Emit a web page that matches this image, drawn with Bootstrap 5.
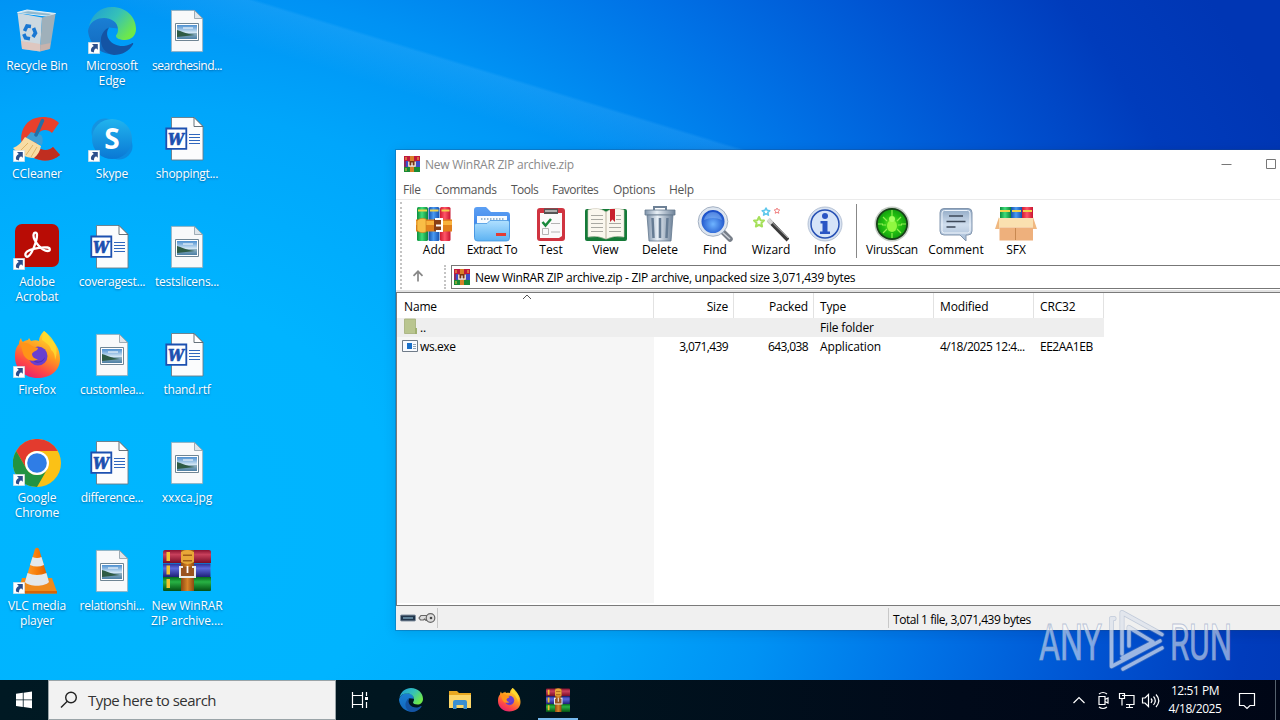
<!DOCTYPE html>
<html lang="en">
<head>
<meta charset="utf-8">
<title>Desktop</title>
<link href="https://cdn.jsdelivr.net/npm/bootstrap@5.3.0/dist/css/bootstrap.min.css" rel="stylesheet">
<style>
html,body{height:100%}
body{font-family:"Open Sans","Noto Sans",sans-serif;font-size:12px;line-height:15px;color:#000;overflow:hidden;background:#000}
svg{display:block;flex:none}
.screen{width:1280px;height:720px}
.desk{height:680px;background:
 linear-gradient(197deg,transparent 299px,rgba(110,200,255,.16) 302px,transparent 345px),
 radial-gradient(ellipse 1260px 1040px at 120px 520px,#00b6ff 0,#00b4ff 22%,#00a6fb 40%,#0092f4 52%,#0072e6 65%,#0054d2 78%,#003cbc 90%,#0036b4 100%)}
.icons{display:grid;grid-template-columns:repeat(3,75px);grid-template-rows:repeat(6,108px);grid-auto-flow:column;width:225px}
.ico{padding-top:7px}
.ico svg{margin-left:13px;width:48px;height:48px}
.ico span{display:block;color:#fff;text-align:center;margin:3px -4px 0 -5px;letter-spacing:-.1px;text-shadow:0 1px 2px rgba(0,40,90,.5)}
.ico .cut{letter-spacing:-.28px}
.ico .cut2{letter-spacing:-.48px}
/* archive window */
.win{left:396px;top:150px;width:930px;height:480px;background:#fff;box-shadow:0 0 0 1px rgba(30,70,120,.3),0 2px 12px rgba(0,20,70,.15)}
.titlebar{height:30px;padding-left:8px;color:#8a8a8a}
.titlebar b{font-weight:400;letter-spacing:-.25px;margin:-2px 0 0 5px}
.titlebar>svg{margin-top:-3px}
.capbtn{width:45px}
.menubar{height:19px;color:#555;padding-left:7px}
.menubar span{letter-spacing:-.3px;white-space:nowrap}
.m1{width:32px}.m2{width:76px}.m3{width:41px}.m4{width:61px}.m5{width:56px}
.menubar .m3,.menubar .m4{letter-spacing:-.5px}
.tools{height:63px;border-top:1px solid #ebebeb;padding-left:9px}
.tool{text-align:center;padding-top:6px;white-space:nowrap}
.tool svg{width:36px;height:36px;margin:0 auto}
.tool span{display:block}
.tool .tight{letter-spacing:-.55px}
.sep{width:1px;height:54px;background:#888;margin:4px 4px 0 8px}
.bars{position:relative}
.grip{position:absolute;left:4px;top:3px;bottom:1px;border-left:2px dotted #c4c4c4}
.addr{height:28px;padding:3px 0 1px 55px;position:relative}
.addr i{position:absolute;left:48px;top:3px;bottom:1px;border-left:2px dotted #c4c4c4}
.addr .up{position:absolute;left:15px;top:8px}
.box{border:1px solid #777;height:24px;padding-left:2px}
.path{letter-spacing:-.31px;margin-left:5px;padding-top:1px}
.strip{height:2px;background:#e2e2e2}
.list{border:1px solid #7a7a7a;border-width:1px 0 1px 1px;height:314px;position:relative}
.gr{display:grid;grid-template-columns:257px 80px 80px 120px 100px 70px}
.hd>div{height:25px;line-height:27px;border-right:1px solid #e2e2e2}
.gr>div{white-space:nowrap;padding:0 5px 0 6px;letter-spacing:-.15px}
.gr>div:first-child{padding-left:7px}
.r1{background:#eee;width:707px}
.r1>div,.r2>div{height:19px;line-height:20px}
.gr>.num{letter-spacing:-.62px;padding-right:6px}
.gr>.dt{letter-spacing:-.5px}
.side{position:absolute;left:0;top:44px;bottom:2px;width:257px;background:#f6f6f6}
.status{height:24px;background:#f0f0f0}
.status div+div{border-left:1px solid #c8c8c8;height:20px;margin-top:2px}
.status .st{line-height:23px;letter-spacing:-.47px}
.wm{left:1036px;top:606px;overflow:visible}
/* taskbar */
.bar{height:40px;background:linear-gradient(90deg,#001923,#00151f 40%,#010a1a 75%,#000616);color:#fff}
.srch{width:288px;height:40px;background:#f2f2f2;border:1px solid #9aa4a8;color:#333;padding-left:11px;font-size:15px}
.srch span{letter-spacing:-.53px;margin-left:10px}
.tb{width:49px;height:40px;position:relative}
.tb.t0{margin-left:1px}
.tb.on::after{content:"";position:absolute;left:5px;right:4px;bottom:0;height:2px;background:#76b9ed}
.clock{width:60px;line-height:18px;letter-spacing:-.45px;text-align:center}
.peek{width:5px;height:40px;border-left:1px solid #56626e}
</style>
</head>
<body>
<svg width="0" height="0" style="position:absolute">
<defs>
<linearGradient id="gEdgeG" x1="0" y1="0" x2="1" y2=".6"><stop offset="0" stop-color="#1b9bd8"/><stop offset=".55" stop-color="#35c1b8"/><stop offset="1" stop-color="#6ee84a"/></linearGradient>
<linearGradient id="gEdgeB" x1="0" y1="0" x2="0" y2="1"><stop offset="0" stop-color="#1a7fd4"/><stop offset="1" stop-color="#1268bd"/></linearGradient>
<linearGradient id="gFox" x1=".8" y1="0" x2=".3" y2="1"><stop offset="0" stop-color="#ffe639"/><stop offset=".45" stop-color="#ff9a1f"/><stop offset=".75" stop-color="#ff4a45"/><stop offset="1" stop-color="#e5216e"/></linearGradient>
<linearGradient id="gSky" x1="0" y1="0" x2="0" y2="1"><stop offset="0" stop-color="#21b4ee"/><stop offset="1" stop-color="#0a78d4"/></linearGradient>
<linearGradient id="gCone" x1="0" x2="1"><stop offset="0" stop-color="#ffa030"/><stop offset=".5" stop-color="#f77d08"/><stop offset="1" stop-color="#d85a00"/></linearGradient>
<linearGradient id="gPic" x1="0" y1="0" x2="0" y2="1"><stop offset="0" stop-color="#4d8fd0"/><stop offset=".55" stop-color="#d5e8f5"/><stop offset=".6" stop-color="#8fb0c0"/><stop offset="1" stop-color="#4c7fa5"/></linearGradient>
<linearGradient id="bR" x1="0" y1="0" x2="0" y2="1"><stop offset="0" stop-color="#8a1230"/><stop offset=".35" stop-color="#c8405c"/><stop offset="1" stop-color="#7a0c28"/></linearGradient>
<linearGradient id="bB" x1="0" y1="0" x2="0" y2="1"><stop offset="0" stop-color="#2a2a90"/><stop offset=".35" stop-color="#5b68dc"/><stop offset="1" stop-color="#202078"/></linearGradient>
<linearGradient id="bG" x1="0" y1="0" x2="0" y2="1"><stop offset="0" stop-color="#066a1c"/><stop offset=".35" stop-color="#28b244"/><stop offset="1" stop-color="#045014"/></linearGradient>
<linearGradient id="bS" x1="0" x2="1"><stop offset="0" stop-color="#8e4a12"/><stop offset=".5" stop-color="#d88428"/><stop offset="1" stop-color="#8e4a12"/></linearGradient>
<linearGradient id="vG" x1="0" x2="1"><stop offset="0" stop-color="#0c8f3c"/><stop offset=".45" stop-color="#3fdc7a"/><stop offset="1" stop-color="#0a8438"/></linearGradient>
<linearGradient id="vB" x1="0" x2="1"><stop offset="0" stop-color="#1450a8"/><stop offset=".45" stop-color="#4a9af2"/><stop offset="1" stop-color="#1450b0"/></linearGradient>
<linearGradient id="vR" x1="0" x2="1"><stop offset="0" stop-color="#d01a30"/><stop offset=".45" stop-color="#ff5568"/><stop offset="1" stop-color="#c81430"/></linearGradient>
<linearGradient id="gFold" x1="0" y1="0" x2="0" y2="1"><stop offset="0" stop-color="#b0e0ff"/><stop offset="1" stop-color="#5cb2f2"/></linearGradient>
<linearGradient id="gFoldB" x1="0" y1="0" x2="0" y2="1"><stop offset="0" stop-color="#5ca0f4"/><stop offset="1" stop-color="#2f78e4"/></linearGradient>
<linearGradient id="gMetal" x1="0" x2="1"><stop offset="0" stop-color="#7f93aa"/><stop offset=".4" stop-color="#e8eff6"/><stop offset="1" stop-color="#6f839a"/></linearGradient>
<linearGradient id="gCom" x1="0" y1="0" x2="0" y2="1"><stop offset="0" stop-color="#8fa8c4"/><stop offset=".5" stop-color="#cfdded"/><stop offset="1" stop-color="#a5bbd5"/></linearGradient>
<radialGradient id="gLens" cx=".5" cy=".6"><stop offset="0" stop-color="#6fb4ff"/><stop offset="1" stop-color="#1a4fc8"/></radialGradient>
<radialGradient id="gVir"><stop offset="0" stop-color="#7cf030"/><stop offset=".6" stop-color="#22c010"/><stop offset="1" stop-color="#14a010"/></radialGradient>

<symbol id="lnk" viewBox="0 0 12 12"><path fill="#fff" stroke="#c8d4dc" stroke-width=".6" d="M.3.3h11.4v11.4H.3z"/><path d="M4 2h5.800v5.800L8 6.200Q5.800 7 5.800 10.400L3 9.500Q2.300 5.500 5.800 3.900z" fill="#2c4f8c"/></symbol>
<symbol id="edge" viewBox="0 0 48 48">
<path fill="url(#gEdgeB)" d="M0 24C1 16 8 10 17 10.500c8 .5 13 5 13 11l-9-1c-7 3-7 14 0 20 5 4 10 5 13 4.500C20 52 2 42 0 24z"/>
<path fill="url(#gEdgeG)" d="M1 19C4 7 13 0 24 0c14 0 24 10 24 22 0 7-5 11-11 11-5 0-9-1.600-9-4 0-1.500 2-2 2-6.500C30 15 23 11 16 11 9 11 4 14 1 19z"/>
<path fill="#1454a4" d="M21 20.500c-6 9 3 19.500 15 18.500 4-.5 6.500-2 8-2.800 1-.4 1.600.5 1 1.300C41 44 34 48 26 48 17 47 12 39 13 31c1-5 4-9 8-10.500z"/></symbol>
<symbol id="fox" viewBox="0 0 48 48">
<path fill="url(#gFox)" d="M31 0c3 2 5 5 6 8 5 3 10 10 10 20 0 12-10 19-22.500 19S2 38 2 26c0-6 1-10 4-13 0-2 .5-4 2-6 .5 2 1 3 2 4 1-1 3-2 5-2l1-2 2 3c3-1 6-1 8 0C26 6 28 3 31 0z"/>
<circle cx="25" cy="25" r="9.500" fill="#6a3fd0"/><path fill="#4f2fb4" d="M19 28a7 7 0 0 0 13-2 8 8 0 0 1-13 2z"/>
<path fill="#ff9418" d="M7 12c5-1 9 0 12 3l6 2c0 3-5 3-6 6 0 3 3 5 6 5-4 3-10 2-13-2S9 16 7 12z"/>
<path fill="#ffdc2e" d="M31 0c9 6 16 17 11 29 0-5-1-8-4-10 0-4-6-8-9-10 0-3 1-6 2-9z" opacity=".85"/></symbol>
<symbol id="chr" viewBox="0 0 48 48"><circle cx="24" cy="24" r="24" fill="#fbc116"/><path fill="#e33b2e" d="M3.200 12A24 24 0 0 1 44.800 12H24A12 12 0 0 0 13.600 30z"/><path fill="#229342" d="M3.200 12A24 24 0 0 0 24 48L34.400 30A12 12 0 0 1 13.600 30z"/><circle cx="24" cy="24" r="12" fill="#fff"/><circle cx="24" cy="24" r="9.800" fill="#2f7de6"/></symbol>
<symbol id="doc" viewBox="0 0 48 48"><path fill="#f8f9fa" stroke="#9babb5" stroke-width=".8" d="M8.400 3.400H31.500L39.600 11.500V44.600H8.400z"/><path fill="#dfe5ea" stroke="#8b9aa4" stroke-width=".8" d="M31.500 3.400V11.500H39.600z"/>
<path fill="#fff" stroke="#6f8594" d="M12.500 16.500h23v17h-23z"/><path fill="url(#gPic)" d="M14 18h20v14H14z"/><path fill="#2e5b45" d="M14 23c4 1 9 4 18 5l-18 2z"/><path fill="#fff" opacity=".5" d="M20 20h10v2H20z"/></symbol>
<symbol id="word" viewBox="0 0 48 48"><path fill="#fbfcfd" stroke="#6a7a86" stroke-width=".9" d="M8.500 2.500H31L40 11.500V45H8.500z"/><path fill="#fff" stroke="#55626c" stroke-width=".9" d="M31 2.500V11.500H40z"/><path fill="#fff" stroke="#1d50b0" stroke-width="1.800" d="M3.300 13.500h20v20.300h-20z"/><text x="13" y="29.500" text-anchor="middle" font-family="DejaVu Serif,serif" font-size="16" font-weight="700" font-style="italic" fill="#1d50b0" stroke="#1d50b0" stroke-width=".7" textLength="16" lengthAdjust="spacingAndGlyphs">W</text><path stroke="#2f66bd" d="M26 19.500h11M26 22.500h11M26 25.500h11M26 28.500h11"/></symbol>
<symbol id="rar" viewBox="0 0 48 42" preserveAspectRatio="none">
<path fill="url(#bR)" d="M2 1h44q2 0 2 2v11H0V3q0-2 2-2z"/><path fill="url(#bB)" d="M0 14.500h47.500V28H0z"/><path fill="url(#bG)" d="M0 28h48v13q0 1-1 1H1q-1 0-1-1z"/>
<path fill="#f2c230" d="M3.500 3h3.500v9H3.500zM3.500 16.500h3.500v9H3.500zM3.500 30h3.500v9H3.500z"/>
<path fill="url(#bS)" d="M18 1h13v41H18z"/><path fill="#e8a838" d="M18 3q6-4 13 0v10q-6 4-13 0z"/><path fill="#a05c18" d="M20 5.500h9V7h-9zM20 11h9v1.500h-9z"/>
<path fill="#9a5420" d="M18 18h13v10H18z"/><path fill="none" stroke="#ececea" stroke-width="2" d="M20 18h-3v10h15V18h-3"/><path stroke="#fff" stroke-width="1.800" d="M24.500 17v7"/></symbol>
<symbol id="rar16" viewBox="0 0 16 16"><path fill="#c0183c" d="M0 0h16v5H0z"/><path fill="#3c4cc8" d="M0 5h16v6H0z"/><path fill="#188a34" d="M0 11h16v5H0z"/><path fill="#f0c040" d="M1.500 1h1v3h-1zM1.500 12h1v3h-1zM13.500 1h1v3h-1z"/><path fill="#8c2860" d="M0 5h2v6H0z"/><path fill="#d88028" d="M6 0h4v16H6z"/><path fill="#7a3410" d="M4 5h8v6H4z"/><path fill="none" stroke="#fff" stroke-width="1.200" d="M4.800 5.500v4.700h6.400V5.500M8 6.500V10"/></symbol>
</defs>
</svg>

<div class="screen position-relative overflow-hidden d-flex flex-column">
<main class="desk">
<div class="icons">
<div class="ico"><svg viewBox="0 0 48 48"><path fill="#c9dfea" stroke="#e9f3f8" d="M4.500 5.500L14 3l28.500 3.500L37 9.500z"/><path fill="#8fb9d0" d="M8 6L15 4.300l23 2.700-3 1.400z"/><path fill="#ccd8e0" d="M4.500 6L29 10.500 27 44.500 9 42z"/><path fill="#9fb0ba" d="M29 10.500L42.500 7 37 42l-10 2.500z"/><path fill="#efb5a0" opacity=".5" d="M8 34l19.500 3-.5 7.500L9 42zM27.500 38l10-2-1 6-9.500 2.500z"/><g fill="none" stroke="#1977d2" stroke-width="3.600"><path d="M11.500 24l2.500-5 4 .5M20.500 21l2 5-2.500 4M17 31.800l-4.500-.8-1.700-4"/></g></svg><span>Recycle Bin</span></div>
<div class="ico"><svg viewBox="0 0 48 48"><path fill="#e8402c" d="M46 8L39 18c-4-4-11-4-14 1s-2 14 4 16c4 1.500 8 0 11-3l7 8C38 47 27 47 19 42S6 27 9 17 20 2 30 2c7 0 12 2 16 6z"/><path fill="#c02e20" d="M47 40c-8 7-19 7-27 2l8-8c4 2 9 1 12-2z"/><path fill="#3e9fd6" d="M18 17l10 3c2 2 2 6 1 10L12 24z"/><path stroke="#2470a8" stroke-width="3.500" stroke-linecap="round" d="M29.500 5.500L23 20"/><path fill="#f8dca4" d="M12 22l16 9c-1 5-3 9-7 12-8 0-17-5-21-10 5-2 9-6 12-11z"/><path stroke="#e0b468" fill="none" d="M15 28L7 36M20 30l-7 10M24 32l-6 10"/><use href="#lnk" y="35" width="12" height="12"/></svg><span>CCleaner</span></div>
<div class="ico"><svg viewBox="0 0 48 48"><rect x="2" y="1" width="44" height="43" rx="7" fill="#b80c05"/><path fill="none" stroke="#fff" stroke-width="2.300" stroke-linejoin="round" d="M12.500 31c0-4 14-7.500 22-6.500 3 .5 3 3.500 0 3.500C29 28 20 18 20.500 12c.5-3.500 3.500-3 3.500 0 0 6-5 19-9 21.500-1.500.8-3-.7-2.500-2.500z"/><use href="#lnk" y="35" width="12" height="12"/></svg><span>Adobe<br>Acrobat</span></div>
<div class="ico"><svg><use href="#fox" width="48" height="48"/><use href="#lnk" y="35" width="12" height="12"/></svg><span>Firefox</span></div>
<div class="ico"><svg><use href="#chr" width="48" height="48"/><use href="#lnk" y="35" width="12" height="12"/></svg><span>Google<br>Chrome</span></div>
<div class="ico"><svg viewBox="0 0 48 48"><path fill="#f08a1c" d="M9 31h30l5 14q0 1.500-1.500 1.500h-34L5 45z"/><path fill="#d86406" d="M6 44h38v2.500H6z"/><path fill="url(#gCone)" d="M22 2q2-2.500 4 0l10 33c-4 5-20 5-24 0z"/><path fill="#e4e8ea" d="M19.500 10q4.500 2 9 0l2.500 8q-7 3-14 0zM14.500 26q9.500 4 19 0l2.500 9c-4 5-20 5-24 0z"/><use href="#lnk" y="35" width="12" height="12"/></svg><span>VLC media<br>player</span></div>
<div class="ico"><svg><use href="#edge" width="48" height="48"/><use href="#lnk" y="35" width="12" height="12"/></svg><span>Microsoft<br>Edge</span></div>
<div class="ico"><svg viewBox="0 0 48 48"><circle cx="17" cy="17" r="13.500" fill="#1593e0"/><circle cx="31" cy="31" r="13.500" fill="#0c8ae0"/><circle cx="24" cy="24" r="20" fill="url(#gSky)"/><text x="24" y="34" text-anchor="middle" font-family="Open Sans,sans-serif" font-weight="700" font-size="28" fill="#fff">S</text><use href="#lnk" y="35" width="12" height="12"/></svg><span>Skype</span></div>
<div class="ico"><svg><use href="#word" width="48" height="48"/></svg><span class="cut">coveragest...</span></div>
<div class="ico"><svg><use href="#doc" width="48" height="48"/></svg><span class="cut">customlea...</span></div>
<div class="ico"><svg><use href="#word" width="48" height="48"/></svg><span class="cut">difference...</span></div>
<div class="ico"><svg><use href="#doc" width="48" height="48"/></svg><span class="cut">relationshi...</span></div>
<div class="ico"><svg><use href="#doc" width="48" height="48"/></svg><span class="cut2">searchesind...</span></div>
<div class="ico"><svg><use href="#word" width="48" height="48"/></svg><span class="cut">shoppingt...</span></div>
<div class="ico"><svg><use href="#doc" width="48" height="48"/></svg><span class="cut">testslicens...</span></div>
<div class="ico"><svg><use href="#word" width="48" height="48"/></svg><span class="cut">thand.rtf</span></div>
<div class="ico"><svg><use href="#doc" width="48" height="48"/></svg><span>xxxca.jpg</span></div>
<div class="ico"><svg><use href="#rar" y="2" width="48" height="42"/></svg><span>New WinRAR ZIP archive....</span></div>
</div>

<section class="win position-absolute d-flex flex-column">
<div class="titlebar d-flex align-items-center"><svg width="16" height="16"><use href="#rar16"/></svg><b>New WinRAR ZIP archive.zip</b>
<div class="d-flex ms-auto pe-3 me-1"><div class="capbtn"><svg width="45" height="30" fill="none" stroke="#777"><path d="M5.500 14.500h10"/></svg></div><div class="capbtn"><svg width="45" height="30" fill="none" stroke="#777"><path d="M5.500 9.500h9v9h-9z"/></svg></div></div></div>
<div class="menubar d-flex align-items-center"><span class="m1">File</span><span class="m2">Commands</span><span class="m3">Tools</span><span class="m4">Favorites</span><span class="m5">Options</span><span>Help</span></div>
<div class="bars">
<div class="grip"></div>
<div class="tools d-flex">
<div class="tool" style="width:58px"><svg viewBox="0 0 36 36"><rect x="1" y="1" width="11" height="34" rx="1.500" fill="url(#vG)"/><rect x="12.500" y="1" width="11" height="34" rx="1.500" fill="url(#vB)"/><rect x="24" y="1" width="10.500" height="34" rx="1.500" fill="url(#vR)"/><path fill="#f2d24a" d="M2 3.500h9v2H2zM14 3.500h8.500v2H14zM25.500 3.500h8v2h-8z"/><path fill="#e0801c" d="M0 13.500h36v12H0z"/><path fill="#f9b23c" d="M0 15h36v4H0z"/><path fill="#f9be46" stroke="#c87818" stroke-width=".6" d="M1 15q3-4 9-2v13q-6 2-9-2z"/><path fill="#8a3f14" d="M18 13h8v12h-8z"/><path fill="none" stroke="#fff" stroke-width="2" d="M19 13h7v12h-6M20 19.500h6"/></svg><span>Add</span></div>
<div class="tool" style="width:58px"><svg viewBox="0 0 36 36"><path fill="url(#gFoldB)" d="M0 4q0-3 3-3h9l5 5h16q3 0 3 3v22H0z"/><path fill="#f7fbff" d="M3 10h30v14H3z"/><path stroke="#9bb5cc" stroke-width="2" stroke-dasharray="1.500 1.500" d="M7 13h23"/><path fill="url(#gFold)" stroke="#4596e0" stroke-width=".8" d="M.5 19q0-1.500 1.500-1.500h11l3-3H34q1.500 0 1.500 1.500V32q0 3-3 3h-29q-3 0-3-3z"/><path fill="#e23c34" d="M22 27h10v3H22z"/></svg><span class="tight">Extract To</span></div>
<div class="tool" style="width:60px"><svg viewBox="0 0 36 36"><rect x="4" y="2" width="28" height="33" rx="3" fill="#d03440"/><path fill="#fafafa" d="M7 7h22v23l-3 2H7z"/><path fill="#555" d="M11 2.500h14V8H11z"/><path stroke="#ccc" stroke-width="1.500" d="M12 5h12"/><path stroke="#178a3c" stroke-width="2.500" fill="none" d="M9.500 16l3 3.500L18 13"/><path fill="none" stroke="#b4b4b4" d="M18 17.500h9M9.500 22.500h6v6h-6zM18 26h9"/></svg><span>Test</span></div>
<div class="tool" style="width:49px"><svg viewBox="0 0 42 36" style="width:42px;margin-left:4px"><rect x="0" y="3" width="42" height="32" rx="2" fill="#157a38"/><path fill="#faf7ee" stroke="#cfc9b8" stroke-width=".6" d="M3 4q10-4 18 2 8-6 18-2v27q-10-2-18 2-8-4-18-2z"/><path stroke="#a9a9a2" d="M6 9.500h12M6 13.500h12M6 17.500h12M6 21.500h12M6 25.500h12M24 17.500h12M24 21.500h12M24 25.500h12M31 9.500h5M31 13.500h5"/><path stroke="#b8b09c" d="M21 6v27"/><path fill="#c8202c" d="M25 3h5v13l-2.500-2.500L25 16z"/></svg><span>View</span></div>
<div class="tool" style="width:60px"><svg viewBox="0 0 36 36"><path fill="none" stroke="#6e8196" stroke-width="2" d="M12 4V1h12v3"/><path fill="url(#gMetal)" stroke="#64788e" stroke-width=".8" d="M3 4h30v5H3z"/><path fill="url(#gMetal)" stroke="#64788e" stroke-width=".8" d="M5 9h26l-2 26H7z"/><path stroke="#667c94" stroke-width="2.500" d="M10.500 12l1 20M18 12v20M25.500 12l-1 20"/></svg><span>Delete</span></div>
<div class="tool" style="width:50px"><svg viewBox="0 0 36 36"><path stroke="#777e88" stroke-width="5.500" stroke-linecap="round" d="M25 25l8 8"/><path stroke="#c9ced6" stroke-width="1.500" d="M24 25l9 8"/><circle cx="16" cy="15.500" r="13" fill="url(#gLens)" stroke="#dde5ef" stroke-width="3"/><circle cx="16" cy="15.500" r="14.800" fill="none" stroke="#8d9db4" stroke-width=".8"/><path fill="#9fceff" opacity=".4" d="M7 14q2-8 9-8t9 8q-9-4-18 0z"/></svg><span>Find</span></div>
<div class="tool" style="width:62px"><svg viewBox="0 0 36 36"><path stroke="#3a3a3a" stroke-width="4" d="M15.500 14L35 34"/><path stroke="#aaa" d="M16 13.500L35 32"/><path stroke="#d8d8d8" stroke-width="4" d="M15 13.500l4 4"/><g fill="none" stroke-linejoin="round"><path stroke="#a5e05a" stroke-width="2" d="M6 11l1.500 3.200 3.500.4-2.600 2.400.7 3.500L6 18.800l-3.100 1.700.7-3.500L1 14.600l3.500-.4z"/><path stroke="#5fc8ec" stroke-width="1.600" d="M13 2l1.200 2.400 2.600.3-2 1.800.6 2.600-2.400-1.300-2.400 1.300.6-2.600-2-1.800 2.600-.3z"/><path stroke="#f08080" d="M24 2l.8 1.700 2 .3-1.400 1.300.4 2-1.800-1-1.800 1 .4-2L21.200 4l2-.3z"/></g></svg><span>Wizard</span></div>
<div class="tool" style="width:46px"><svg viewBox="0 0 36 36"><circle cx="18" cy="18" r="17" fill="#d9e3f2" stroke="#a8b6cc" stroke-width=".8"/><circle cx="18" cy="18" r="14" fill="#d6e4f8" stroke="#2650b4" stroke-width="1.500"/><circle cx="18" cy="10" r="3" fill="#2a55c4"/><path fill="#2a55c4" d="M13.500 15H20.500V25.500H23V28H13V25.500h2.500V17.500h-2z"/></svg><span>Info</span></div>
<div class="sep"></div>
<div class="tool" style="width:62px"><svg viewBox="0 0 36 36"><circle cx="18" cy="18" r="17.500" fill="#c4cac4"/><circle cx="18" cy="18" r="16" fill="#173f18"/><circle cx="18" cy="18" r="14.300" fill="url(#gVir)"/><path fill="none" stroke="#90f050" stroke-width="1.200" d="M18 4v6M18 27v5M4 18h5M27 18h5M13 15L9 11M23 15l4-4M12 19H8M24 19h4M13 23l-4 4M23 23l4 4"/><ellipse cx="18" cy="20" rx="5" ry="6" fill="#90f840"/><circle cx="18" cy="13" r="3" fill="#a4ff60"/></svg><span style="letter-spacing:-.3px">VirusScan</span></div>
<div class="tool" style="width:66px"><svg viewBox="0 0 36 36"><path fill="url(#gCom)" stroke="#8396ae" d="M6 2.500h24q4 0 4 4V25q0 4-4 4h-2v6l-6-6H6q-4 0-4-4V6.500q0-4 4-4z"/><path fill="none" stroke="#eef4fb" d="M6.500 4.500h23q2.500 0 2.500 2.500v17.500q0 2.500-2.500 2.500h-23Q4 27 4 24.500V7q0-2.500 2.500-2.500z"/><path stroke="#3c4858" stroke-width="1.600" d="M11 10h14M8.500 15.500h19M8.500 21h9"/></svg><span>Comment</span></div>
<div class="tool" style="width:54px"><svg viewBox="0 0 42 36" style="width:42px;margin-left:6px"><path fill="url(#vG)" d="M5 1h11v14H5z"/><path fill="url(#vB)" d="M16 1h11v14H16z"/><path fill="url(#vR)" d="M27 1h11v14H27z"/><path fill="#f2d24a" d="M5 4h10v2H5zM17 4h9v2h-9zM28 4h9v2h-9z"/><path fill="#f0b880" d="M4 11l-4 12h4.500zM38 11l4 12h-4z"/><path fill="#fae0b0" d="M4 12h34v9.500H4z"/><path fill="#eeb07c" d="M4.500 21.500h33.500v13H4.500z"/><path stroke="#c88850" fill="none" d="M20.500 22v12"/></svg><span>SFX</span></div>
</div>
<div class="addr"><i></i><svg class="up" width="14" height="12" fill="none" stroke="#888" stroke-width="1.700"><path d="M7 11.500V1.500M2.500 5.800L7 1.300l4.500 4.500"/></svg>
<div class="box d-flex align-items-center"><svg width="16" height="16"><use href="#rar16"/></svg><span class="path">New WinRAR ZIP archive.zip - ZIP archive, unpacked size 3,071,439 bytes</span></div></div>
</div>
<div class="strip"></div>
<div class="list">
<div class="side"></div>
<div class="gr hd position-relative"><div>Name<svg class="position-absolute" style="left:125px;top:1px" width="10" height="6" fill="none" stroke="#555"><path d="M1 5l4-4 4 4"/></svg></div><div class="text-end">Size</div><div class="text-end">Packed</div><div>Type</div><div>Modified</div><div>CRC32</div></div>
<div class="gr r1 position-relative"><div class="d-flex"><svg width="14" height="17"><path fill="#b9c58f" stroke="#a3af78" stroke-width=".8" d="M.5 1h11v14.500H.5z"/><path fill="#9fb070" d="M11 10h2v6h-2z"/></svg><span style="padding-left:2px">..</span></div><div></div><div></div><div>File folder</div><div></div><div></div></div>
<div class="gr r2 position-relative"><div class="d-flex" style="padding-left:5px"><svg width="16" height="13" style="margin-top:3px"><path fill="#f8fbff" stroke="#6f7b88" d="M.5.500h15v11H.500z"/><path fill="#1a70c8" d="M5 3h5v6H5z"/><path stroke="#8fa3b4" d="M11 4.500h3M11 6.500h3M11 8.500h3"/></svg><span style="padding-left:2px;letter-spacing:-.4px">ws.exe</span></div><div class="text-end num">3,071,439</div><div class="text-end num">643,038</div><div>Application</div><div class="dt">4/18/2025 12:4...</div><div class="dt">EE2AA1EB</div></div>
</div>
<div class="status d-flex"><div style="width:41px"><svg width="41" height="24"><rect x="4.500" y="9" width="15" height="6" rx="1" fill="#22364c" stroke="#8795a4"/><path stroke="#9fd0e8" d="M7 12h10"/><path fill="#ddd" stroke="#666" stroke-width="1.200" d="M31 9.500h-6l-2 2.500 1.500 2h3l1-1 1.500 1.500h2"/><circle cx="34.500" cy="12" r="4.300" fill="#ddd" stroke="#666" stroke-width="1.200"/><circle cx="35" cy="12" r="1.300" fill="#444"/></svg></div><div style="width:451px"></div><div class="st ps-1">Total 1 file, 3,071,439 bytes</div></div>
</section>

<svg class="wm position-absolute" width="220" height="72" viewBox="1036 606 220 72">
<g font-family="Roboto,sans-serif" font-size="50" fill="#fff" fill-opacity=".52" stroke="#8ea2c4" stroke-opacity=".6" stroke-width="1.200"><text x="1039" y="660" textLength="63" lengthAdjust="spacingAndGlyphs">ANY</text><text x="1170" y="660" textLength="62" lengthAdjust="spacingAndGlyphs">RUN</text></g>
<g fill="none" stroke-linejoin="round" stroke-linecap="round"><path stroke="#7c93b8" stroke-opacity=".4" stroke-width="5" d="M1114 618.500h-2.500v48L1160 641M1122 654V612.500l40 22M1122 658L1153 642 1129 627.500V646M1123 669L1162 648"/><path stroke="#fff" stroke-opacity=".52" stroke-width="3.600" d="M1114 618.500h-2.500v48L1160 641M1122 654V612.500l40 22M1122 658L1153 642 1129 627.500V646M1123 669L1162 648"/></g></svg>
</main>

<footer class="bar d-flex align-items-center">
<div style="width:48px"><svg width="48" height="40"><path fill="#fff" d="M16 13.800l6.800-1v6.700H16zM23.600 12.700L32 11.500v8h-8.400zM16 20.300h6.800V27L16 26zM23.600 20.300H32v8l-8.400-1.200z"/></svg></div>
<div class="srch d-flex align-items-center"><svg width="18" height="18" fill="none" stroke="#222" stroke-width="1.400"><circle cx="11" cy="6.500" r="5.300"/><path d="M7.300 10.200L1 16.500"/></svg><span>Type here to search</span></div>
<div class="tb"><svg width="48" height="40" fill="none" stroke="#fff"><path d="M16.500 12v3.500h10V12M16.500 28v-3.500h10V28M16.500 15.500v9M26.500 15.500v9M30.500 12v4M30.500 22v6" stroke-width="1.200"/><path fill="#fff" stroke="none" d="M29 17h3v3h-3z"/></svg></div>
<div class="tb d-flex align-items-center justify-content-center t0"><svg width="24" height="24"><use href="#edge"/></svg></div>
<div class="tb d-flex align-items-center justify-content-center"><svg width="22" height="20"><path fill="#e8a820" d="M0 1h8l2 2h12v4H0z"/><path fill="#fcd668" d="M0 5h22v13H0z"/><path fill="#3b8fd0" d="M4 12q0-2 2-2h10q2 0 2 2v7h-3.500v-4h-7v4H4z"/></svg></div>
<div class="tb d-flex align-items-center justify-content-center"><svg width="24" height="24"><use href="#fox"/></svg></div>
<div class="tb on d-flex align-items-center justify-content-center"><svg width="24" height="24"><use href="#rar"/></svg></div>
<div class="ms-auto d-flex align-items-center">
<svg width="95" height="40" fill="none" stroke="#fff" stroke-width="1.200"><path d="M3.500 23l5.500-5.500 5.500 5.500"/><path d="M29 16.500h6v8h-6zM35 19.500l3-1.500v5l-3-1.500M29 14q4-3 8 0M29 27q4 3 8 0"/><path d="M52 15.500h12v9H56M59.500 24.500v3M56 27.500h7M49.500 13.500h5v5h-5zM52 18.500v7"/><path d="M72.500 18h2.500l3.500-3.500v12L75 23h-2.500zM81 18.500q2 2 0 4.500M83.500 16.500q3.500 4 0 8.500M86 14.500q5.500 6 0 12.500"/></svg>
<div class="clock">12:51 PM<br>4/18/2025</div>
<svg width="50" height="40" fill="none" stroke="#fff" stroke-width="1.200"><path d="M14.500 13.500h15v12h-4.500l-3 3-3-3h-4.500z"/></svg>
<div class="peek"></div>
</div>
</footer>
</div>
<script src="https://cdn.jsdelivr.net/npm/bootstrap@5.3.0/dist/js/bootstrap.bundle.min.js"></script>
</body>
</html>
